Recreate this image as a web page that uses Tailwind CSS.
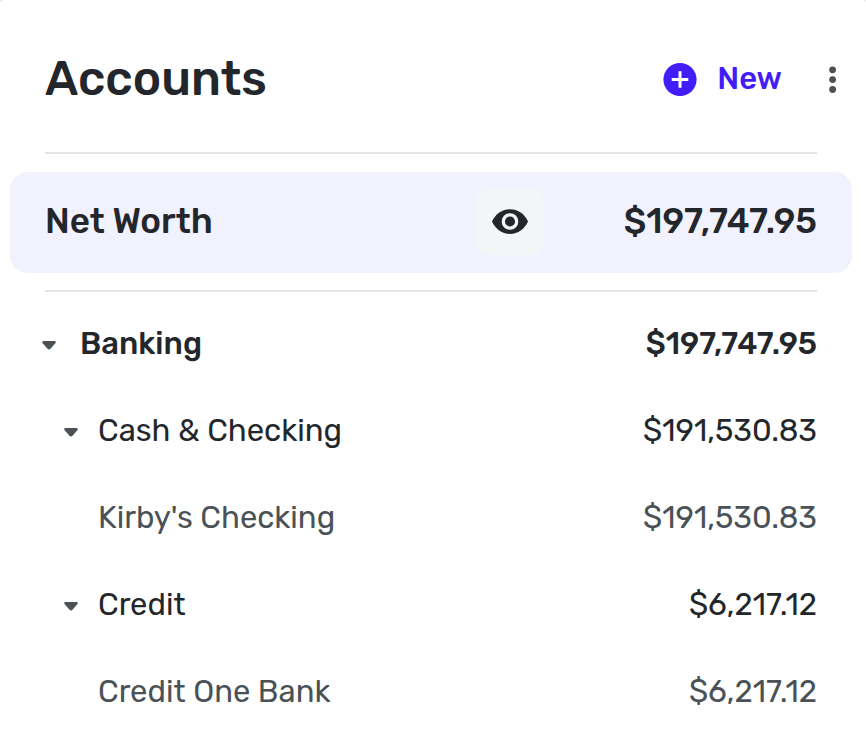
<!DOCTYPE html>
<html lang="en">
<head>
<meta charset="utf-8">
<meta name="viewport" content="width=device-width, initial-scale=1">
<title>Accounts</title>
<script src="https://cdn.jsdelivr.net/npm/@tailwindcss/browser@4"></script>
</head>
<body class="bg-[#e4e5e5] font-[Rubik,Roboto,sans-serif] text-[#23272b]">
<main class="min-h-screen rounded-t-[4px] bg-white">
  <header class="flex items-center pt-[43px] pr-[23px] pb-[37px] pl-[45px]">
    <h1 class="grow text-[48px] leading-[72px] font-medium">Accounts</h1>
    <button type="button" class="flex items-center gap-5 text-[31px] leading-10 font-medium text-[#421df5]">
      <svg class="size-[34px]" viewBox="0 0 34 34" aria-hidden="true"><circle cx="17" cy="17.500" r="16.600" fill="#421df5"/><path d="M17 9.200v16.600M8.700 17.500h16.600" stroke="#fff" stroke-width="3"/></svg>
      New
    </button>
    <button type="button" aria-label="More options" class="ml-[41px] flex w-5 justify-center">
      <svg class="h-8 w-2" viewBox="0 0 8 32" fill="#4a5257" aria-hidden="true"><circle cx="3.600" cy="6.800" r="3.400"/><circle cx="3.600" cy="16.600" r="3.400"/><circle cx="3.600" cy="26.500" r="3.400"/></svg>
    </button>
  </header>
  <hr class="mr-[49px] ml-[45px] border-t-2 border-[#e3e7e7]">
  <section class="mt-[18px] mr-[14px] mb-[17px] ml-[10px] flex h-[101px] items-center rounded-[18px] bg-[#f2f1fe] px-[35px] pb-0.5 text-[35px] font-medium">
    <h2 class="grow">Net Worth</h2>
    <button type="button" aria-label="Show net worth" class="flex size-[66px] items-center justify-center rounded-xl bg-[#f3f5f7]">
      <svg class="h-[26px] w-9" viewBox="0 0 36 26" aria-hidden="true"><path d="M0 12.500C3.400 5 10 .200 18 .200S32.600 5 36 12.500C32.600 20 26 24.900 18 24.900S3.400 20 0 12.500Z" fill="#23272b"/><circle cx="18" cy="12.500" r="6.700" fill="none" stroke="#f3f5f7" stroke-width="3.300"/></svg>
    </button>
    <span class="w-[274px] text-right">$197,747.95</span>
  </section>
  <hr class="mr-[49px] ml-[45px] border-t-2 border-[#e3e7e7]">
  <ul class="pt-2 pr-[49px] text-[31px] leading-[87px]">
    <li class="flex items-center pl-[42px] font-medium">
      <button type="button" aria-label="Collapse Banking" class="mr-6 pt-1"><svg class="h-[9px] w-[14px]" viewBox="0 0 14 9" fill="#4a5257" aria-hidden="true"><path d="M1.300 0H12.700Q14.400.400 13.500 2L8.700 7.600Q7 9.600 5.300 7.600L.500 2Q-.400.400 1.300 0Z"/></svg></button>
      <span class="grow">Banking</span><span>$197,747.95</span>
    </li>
    <li class="flex items-center pl-16">
      <button type="button" aria-label="Collapse Cash &amp; Checking" class="mr-5 pt-1"><svg class="h-[9px] w-[14px]" viewBox="0 0 14 9" fill="#4a5257" aria-hidden="true"><path d="M1.300 0H12.700Q14.400.400 13.500 2L8.700 7.600Q7 9.600 5.300 7.600L.500 2Q-.400.400 1.300 0Z"/></svg></button>
      <span class="grow">Cash &amp; Checking</span><span>$191,530.83</span>
    </li>
    <li class="flex items-center pl-[98px] text-[#4a5257]">
      <span class="grow">Kirby's Checking</span><span>$191,530.83</span>
    </li>
    <li class="flex items-center pl-16">
      <button type="button" aria-label="Collapse Credit" class="mr-5 pt-1"><svg class="h-[9px] w-[14px]" viewBox="0 0 14 9" fill="#4a5257" aria-hidden="true"><path d="M1.300 0H12.700Q14.400.400 13.500 2L8.700 7.600Q7 9.600 5.300 7.600L.500 2Q-.400.400 1.300 0Z"/></svg></button>
      <span class="grow">Credit</span><span>$6,217.12</span>
    </li>
    <li class="flex items-center pl-[98px] text-[#4a5257]">
      <span class="grow">Credit One Bank</span><span>$6,217.12</span>
    </li>
  </ul>
</main>
</body>
</html>
